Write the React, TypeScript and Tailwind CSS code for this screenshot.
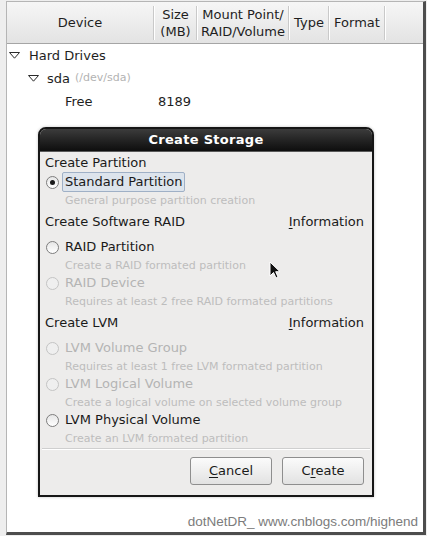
import React from 'react';

const ui = { fontFamily: '"DejaVu Sans", Verdana, sans-serif' };

function Radio({ checked = false, disabled = false }: { checked?: boolean; disabled?: boolean }) {
  return (
    <div
      className={
        'w-[13px] h-[13px] rounded-full border flex items-center justify-center shrink-0 ' +
        (disabled ? 'border-[#c4c4c4] bg-[#efefef]' : 'border-[#7d7d7d] bg-gradient-to-b from-[#e6e6e6] to-white')
      }
    >
      {checked && <div className="w-[5px] h-[5px] rounded-full bg-[#1a1a1a]" />}
    </div>
  );
}

function Option({
  label,
  desc,
  checked,
  disabled,
  focused,
}: {
  label: string;
  desc: string;
  checked?: boolean;
  disabled?: boolean;
  focused?: boolean;
}) {
  return (
    <div className="flex flex-col">
      <div className="h-[18px] flex items-center pl-[1px]">
        <Radio checked={checked} disabled={disabled} />
        <span
          className={
            'ml-[3px] px-[2px] text-[13px] leading-[18px] ' +
            (focused ? 'bg-[#dde4ec] border border-[#9fb0c6] rounded-[2px] h-[20px] leading-[18px] ' : 'border border-transparent ') +
            (disabled ? 'text-[#b4b4b4]' : 'text-[#1a1a1a]')
          }
        >
          {label}
        </span>
      </div>
      <div className="h-[18px] flex items-center pt-[2px] pl-[20px] text-[11px] text-[#bdbdbd]">{desc}</div>
    </div>
  );
}

function Section({ title, info }: { title: string; info?: boolean }) {
  return (
    <div className="h-[29px] pb-[3px] flex items-center justify-between text-[13px] text-[#1a1a1a]">
      <span>{title}</span>
      {info && (
        <span className="mr-[3px]">
          <span className="underline underline-offset-2">I</span>nformation
        </span>
      )}
    </div>
  );
}

function Sep() {
  return (
    <div className="flex flex-row self-center h-[34px]">
      <div className="w-px bg-[#c9c9c9]" />
      <div className="w-px bg-white" />
    </div>
  );
}

function TreeArrow() {
  return (
    <svg width="11" height="7" viewBox="0 0 11 7" className="shrink-0">
      <path d="M0.5 0.5 L10.5 0.5 L5.5 6.2 Z" fill="white" stroke="#2a2a2a" strokeWidth="1" />
    </svg>
  );
}

export default function App() {
  return (
    <div className="relative w-[427px] h-[536px] bg-[#eeeeee] overflow-hidden" style={ui}>
      <div className="absolute left-[6px] top-[1px] w-[420px] h-[534px] bg-white border-l border-t border-[#b5b5b5] border-r-[3px] border-b-[3px] border-r-[#4d4d4d] border-b-[#4d4d4d] flex flex-col">
        {/* column header */}
        <div className="h-[42px] flex flex-row bg-gradient-to-b from-[#f6f6f6] to-[#e3e3e3] border-b border-[#a5a5a5] text-[13px] text-[#1e1e1e] leading-[17px]">
          <div className="w-[146px] flex items-center justify-center">Device</div>
          <Sep />
          <div className="w-[41px] flex items-center justify-center text-center">
            Size
            <br />
            (MB)
          </div>
          <Sep />
          <div className="w-[90px] flex items-center justify-center text-center">
            Mount Point/
            <br />
            RAID/Volume
          </div>
          <Sep />
          <div className="w-[38px] flex items-center justify-center">Type</div>
          <Sep />
          <div className="w-[54px] flex items-center justify-center">Format</div>
          <Sep />
          <div className="flex-1" />
        </div>

        {/* tree rows */}
        <div className="flex flex-col text-[13px] text-[#1e1e1e]">
          <div className="h-[23px] flex items-center pl-[2px]">
            <TreeArrow />
            <span className="ml-[9px]">Hard Drives</span>
          </div>
          <div className="h-[23px] flex items-center pl-[21px]">
            <TreeArrow />
            <span className="ml-[8px]">sda</span>
            <span className="ml-[5px] text-[11px] text-[#b3b3b3]">(/dev/sda)</span>
          </div>
          <div className="h-[23px] flex items-center">
            <span className="ml-[58px] w-[93px]">Free</span>
            <span>8189</span>
          </div>
        </div>

        <div className="mt-auto h-[22px] pt-[3px] flex items-center justify-end pr-[5px] text-[13.5px] text-[#7c7c7c]" style={{ fontFamily: '"Liberation Sans", Arial, sans-serif' }}>
          dotNetDR_ www.cnblogs.com/highend
        </div>
      </div>

      {/* dialog */}
      <div className="absolute left-[38px] top-[127px] w-[336px] h-[370px] border-2 border-[#161616] rounded-t-[8px] bg-[#edeceb] flex flex-col shadow-[0_0_3px_rgba(0,0,0,0.25)]">
        <div className="h-[23px] rounded-t-[6px] bg-gradient-to-b from-[#3c3c3c] to-[#0e0e0e] border-b border-[#5a5a5a] flex items-center justify-center text-white font-bold text-[13px] tracking-[0.3px]">
          Create Storage
        </div>
        <div className="flex flex-col px-[5px] text-[13px] text-[#1a1a1a]">
          <div className="h-[21px] flex items-center">Create Partition</div>
          <Option label="Standard Partition" desc="General purpose partition creation" checked focused />
          <Section title="Create Software RAID" info />
          <Option label="RAID Partition" desc="Create a RAID formated partition" />
          <Option label="RAID Device" desc="Requires at least 2 free RAID formated partitions" disabled />
          <Section title="Create LVM" info />
          <Option label="LVM Volume Group" desc="Requires at least 1 free LVM formated partition" disabled />
          <Option label="LVM Logical Volume" desc="Create a logical volume on selected volume group" disabled />
          <Option label="LVM Physical Volume" desc="Create an LVM formated partition" />
        </div>
        <div className="mx-[2px] mt-[1px] h-px bg-[#cfcfcf] border-b border-white box-content" />
        <div className="flex flex-row justify-end gap-[10px] pr-[8px] pt-[7px]">
          <button className="w-[82px] h-[28px] rounded-[3px] border border-[#8e8e8e] bg-gradient-to-b from-[#fbfbfb] to-[#e2e2e2] text-[13px] text-[#1a1a1a]">
            <span className="underline underline-offset-2">C</span>ancel
          </button>
          <button className="w-[82px] h-[28px] rounded-[3px] border border-[#8e8e8e] bg-gradient-to-b from-[#fbfbfb] to-[#e2e2e2] text-[13px] text-[#1a1a1a]">
            C<span className="underline underline-offset-2">r</span>eate
          </button>
        </div>
      </div>

      {/* mouse pointer */}
      <svg className="absolute left-[269px] top-[261px]" width="13" height="19" viewBox="0 0 13 19">
        <path d="M1 1 L1 15 L4.5 11.5 L7 17 L9 16 L6.7 10.7 L11 10.7 Z" fill="#111" stroke="white" strokeWidth="1" strokeLinejoin="round" />
      </svg>
    </div>
  );
}
